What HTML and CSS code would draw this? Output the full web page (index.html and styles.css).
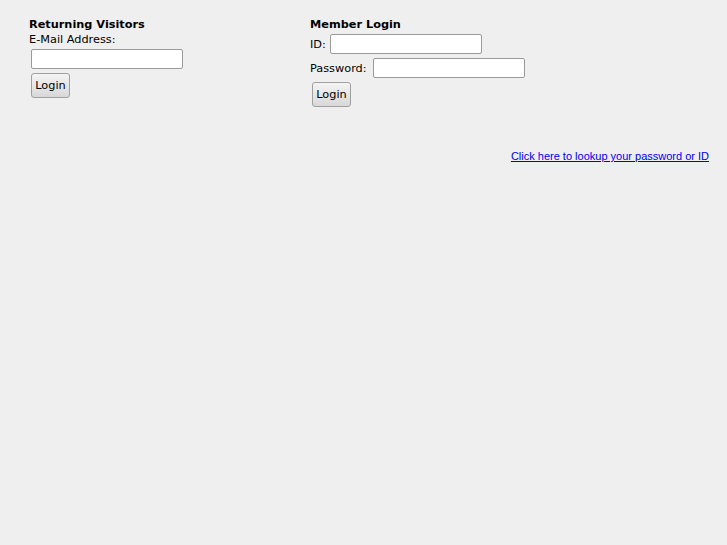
FILE: index.html
```html
<!DOCTYPE html>
<html lang="en">
  <head>
    <meta charset="UTF-8" />
    <title>Login</title>
    <link rel="stylesheet" href="styles.css">
  </head>
  <body>
    <div class="forms">
      <!-- Returning visitors -->
      <form class="login-box visitors">
        <div class="box-title">Returning Visitors</div>
        <div class="label">E-Mail Address:</div>
        <input type="text" class="field" />
        <div><button type="button" class="btn">Login</button></div>
      </form>

      <!-- Member login -->
      <form class="login-box member">
        <div class="box-title">Member Login</div>
        <div class="row">
          <span class="label">ID:</span>
          <input type="text" class="field" />
        </div>
        <div class="row">
          <span class="label wide">Password:</span>
          <input type="password" class="field" />
        </div>
        <div><button type="button" class="btn">Login</button></div>
      </form>
    </div>

    <div class="lookup">
      <a href="#">Click here to lookup your password or ID</a>
    </div>
  </body>
</html>
```

FILE: styles.css
```css
body {
  margin: 0;
  background-color: #efefef;
  font-family: "DejaVu Sans", sans-serif;
  font-size: 11.3px;
  color: #000;
}

.forms {
  display: flex;
  padding: 17px 0 0 29px;
}

.login-box {
  margin: 0;
}

.visitors {
  width: 281px;
}

.box-title {
  font-weight: bold;
  line-height: 14px;
  padding-top: 1px;
}

.label {
  line-height: 15px;
}

.label.wide {
  margin-right: 2px;
}

.row {
  display: flex;
  align-items: center;
  gap: 2px;
}

.field {
  box-sizing: border-box;
  width: 152px;
  height: 20px;
  margin: 2px;
  padding: 1px 2px;
  border: 1px solid #9a9a9a;
  border-radius: 2px;
  background: #fff;
  font-family: "DejaVu Sans", sans-serif;
  font-size: 11.3px;
}

.btn {
  box-sizing: border-box;
  margin: 2px;
  height: 25px;
  width: 39px;
  padding: 0;
  border: 1px solid #a0a0a0;
  border-radius: 3px;
  background: linear-gradient(#f4f4f4, #d8d8d8);
  font-family: "DejaVu Sans", sans-serif;
  font-size: 11.3px;
  color: #000;
}

/* Lookup link */
.lookup {
  text-align: right;
  padding: 41px 18px 0 0;
}

.lookup a {
  font-family: "Liberation Sans", Arial, sans-serif;
  font-size: 11px;
  color: #0000ee;
}
```
